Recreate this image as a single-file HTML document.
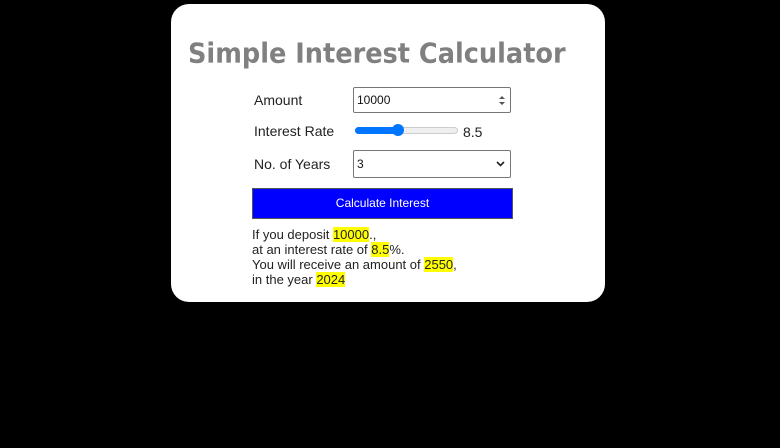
<!DOCTYPE html>
<html><head><style>
html,body{margin:0;padding:0;background:#000;width:780px;height:448px;overflow:hidden;font-family:"Liberation Sans",Arial,sans-serif}
.card{position:absolute;left:171px;top:4px;width:434px;height:298px;background:#fff;border-radius:18px}
h1{position:absolute;left:17px;top:35px;margin:0;font:bold 25.6px "DejaVu Sans",Verdana,sans-serif;color:#808080;white-space:nowrap;transform:scaleY(1.06)}
.lbl{position:absolute;left:83px;font-size:14px;color:#222}
.box{position:absolute;left:182px;width:158px;border:1px solid #767676;border-radius:2px;background:#fff;font-size:12px;color:#111;box-sizing:border-box;padding-left:3px}
.btn{position:absolute;left:81px;top:184px;width:261px;height:31px;background:#0000ff;border:1px solid #555;box-sizing:border-box;color:#fff;font-size:12px;text-align:center;line-height:29px}
.res{position:absolute;left:81px;top:223px;font-size:13px;line-height:15px;color:#222}
.h{background:#ffff00}
</style></head><body>
<div class="card">
<h1>Simple Interest Calculator</h1>
<div class="lbl" style="top:88px">Amount</div>
<div class="box" style="top:83px;height:26px;line-height:24px">10000
<svg style="position:absolute;right:4px;top:7px" width="8" height="11"><path d="M1 4L4 1L7 4Z M1 7L4 10L7 7Z" fill="#555"/></svg></div>
<div class="lbl" style="top:119px">Interest Rate</div>
<div style="position:absolute;left:184px;top:123px;width:103px;height:7px;border-radius:4px;background:#efefef;border:1px solid #ccc;box-sizing:border-box"></div>
<div style="position:absolute;left:184px;top:123px;width:42px;height:7px;border-radius:4px;background:#0075ff"></div>
<div style="position:absolute;left:221px;top:120px;width:12px;height:12px;border-radius:50%;background:#0075ff"></div>
<div class="lbl" style="left:292px;top:120px">8.5</div>
<div class="lbl" style="top:152px">No. of Years</div>
<div class="box" style="top:146px;height:28px;line-height:26px">3
<svg style="position:absolute;right:5px;top:10px" width="9" height="6"><path d="M1 1L4.5 4.5L8 1" stroke="#222" stroke-width="1.6" fill="none"/></svg></div>
<div class="btn">Calculate Interest</div>
<div class="res">If you deposit <span class="h">10000</span>.,<br>at an interest rate of <span class="h">8.5</span>%.<br>You will receive an amount of <span class="h">2550</span>,<br>in the year <span class="h">2024</span></div>
</div>
</body></html>
